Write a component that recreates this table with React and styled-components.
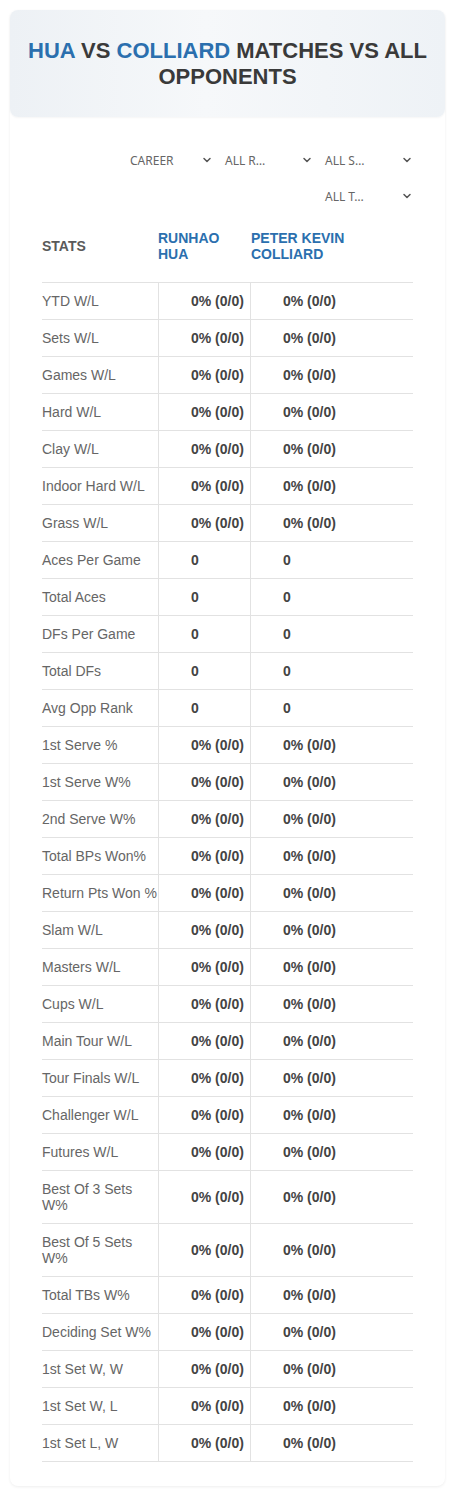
import React from 'react';
import styled, { createGlobalStyle } from 'styled-components';
import { ChevronDown } from 'lucide-react';

const GlobalStyle = createGlobalStyle`
  body {
    margin: 0;
    background: #fff;
    font-family: "Liberation Sans", Arial, sans-serif;
  }
`;

const Page = styled.div`
  padding: 10px 10px 8px;
`;

const Card = styled.div`
  border-radius: 8px;
  background: #fff;
  box-shadow: 0 1px 3px rgba(0, 0, 0, 0.07);
  padding-bottom: 24px;
`;

const TitlePanel = styled.div`
  height: 107px;
  display: flex;
  align-items: center;
  justify-content: center;
  padding: 0 12px;
  box-sizing: border-box;
  border-radius: 8px;
  background: linear-gradient(90deg, #edf1f5 0%, #f6f8fa 45%, #eef2f6 100%);
  box-shadow: 0 1px 2px rgba(0, 0, 0, 0.04);
`;

const Title = styled.h1`
  margin: 0;
  text-align: center;
  font-size: 22px;
  line-height: 26px;
  font-weight: 700;
  color: #3a3a3a;
  text-transform: uppercase;
`;

const Blue = styled.span`
  color: #2b6fae;
`;

const Body = styled.div`
  padding: 25px 32px 0;
`;

const Filters = styled.div`
  display: flex;
  flex-wrap: wrap;
  justify-content: flex-end;
  column-gap: 7px;
`;

const Select = styled.div`
  width: 93px;
  height: 36px;
  display: flex;
  align-items: center;
  justify-content: space-between;
  padding: 0 0 0 ${p => p.$pad}px;
  box-sizing: border-box;
  font-family: "Noto Sans", "Open Sans", sans-serif;
  font-size: 12px;
  color: #666;
  text-transform: uppercase;
  white-space: nowrap;
  svg {
    color: #555;
    flex-shrink: 0;
  }
`;

const Table = styled.div`
  margin-top: 16px;
  border-bottom: 1px solid #e2e2e2;
`;

const HeadRow = styled.div`
  display: grid;
  grid-template-columns: 116px 93px 1fr;
  align-items: center;
  padding: 0 0 20px;
  font-size: 14px;
  line-height: 16px;
  font-weight: 700;
  text-transform: uppercase;
`;

const HeadLabel = styled.div`
  color: #5a5a5a;
`;

const HeadName = styled.div`
  color: #2b6fae;
  padding-right: 20px;
`;

const Row = styled.div`
  display: grid;
  grid-template-columns: 116px 92px 1fr;
  border-top: 1px solid #e2e2e2;
  font-size: 14px;
  line-height: 16px;
`;

const StatCell = styled.div`
  padding: 10px 0;
  color: #666;
`;

const ValueCell = styled.div`
  display: flex;
  align-items: center;
  padding-left: 32px;
  border-left: 1px solid #e2e2e2;
  font-weight: 700;
  color: #444;
  white-space: nowrap;
`;

const pct = '0% (0/0)';

const stats = [
  ['YTD W/L', pct],
  ['Sets W/L', pct],
  ['Games W/L', pct],
  ['Hard W/L', pct],
  ['Clay W/L', pct],
  ['Indoor Hard W/L', pct],
  ['Grass W/L', pct],
  ['Aces Per Game', '0'],
  ['Total Aces', '0'],
  ['DFs Per Game', '0'],
  ['Total DFs', '0'],
  ['Avg Opp Rank', '0'],
  ['1st Serve %', pct],
  ['1st Serve W%', pct],
  ['2nd Serve W%', pct],
  ['Total BPs Won%', pct],
  ['Return Pts Won %', pct],
  ['Slam W/L', pct],
  ['Masters W/L', pct],
  ['Cups W/L', pct],
  ['Main Tour W/L', pct],
  ['Tour Finals W/L', pct],
  ['Challenger W/L', pct],
  ['Futures W/L', pct],
  ['Best Of 3 Sets W%', pct],
  ['Best Of 5 Sets W%', pct],
  ['Total TBs W%', pct],
  ['Deciding Set W%', pct],
  ['1st Set W, W', pct],
  ['1st Set W, L', pct],
  ['1st Set L, W', pct],
];

const filters = [
  { label: 'Career', pad: 10 },
  { label: 'All R…', pad: 5 },
  { label: 'All S…', pad: 5 },
  { label: 'All T…', pad: 5 },
];

const App = () => (
  <Page>
    <GlobalStyle />
    <Card>
      <TitlePanel>
        <Title>
          <Blue>Hua</Blue> vs <Blue>Colliard</Blue> Matches vs All Opponents
        </Title>
      </TitlePanel>
      <Body>
        <Filters>
          {filters.map(f => (
            <Select key={f.label} $pad={f.pad}>
              <span>{f.label}</span>
              <ChevronDown size={12} strokeWidth={3} />
            </Select>
          ))}
        </Filters>
        <Table>
          <HeadRow>
            <HeadLabel>Stats</HeadLabel>
            <HeadName>Runhao Hua</HeadName>
            <HeadName>Peter Kevin Colliard</HeadName>
          </HeadRow>
          {stats.map(([name, v]) => (
            <Row key={name}>
              <StatCell>{name}</StatCell>
              <ValueCell>{v}</ValueCell>
              <ValueCell>{v}</ValueCell>
            </Row>
          ))}
        </Table>
      </Body>
    </Card>
  </Page>
);

export default App;
